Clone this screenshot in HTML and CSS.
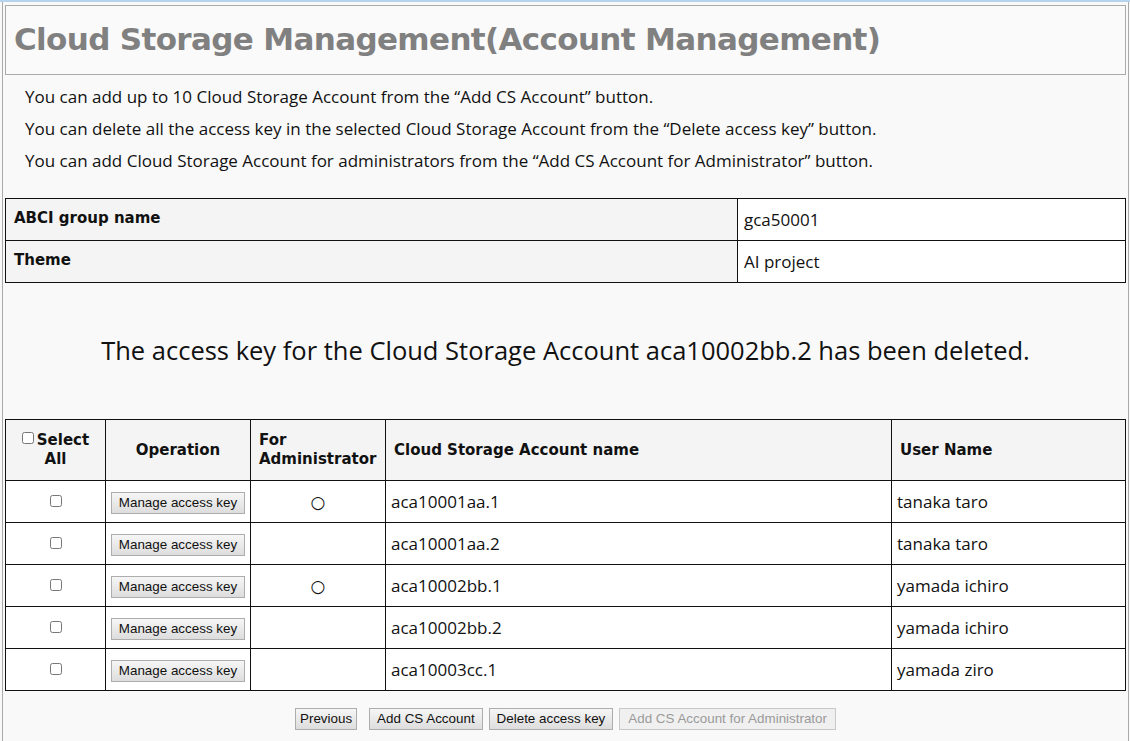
FILE: index.html
```html
<!DOCTYPE html>
<html lang="en">
<head>
<meta charset="utf-8">
<title>Cloud Storage Management(Account Management)</title>
<link rel="stylesheet" href="styles.css">
</head>
<body>
<div class="topline"></div>
<div class="frame">
  <div class="titlebox">
    <h1 class="title">Cloud Storage Management(Account Management)</h1>
  </div>
  <div class="intro">
    <p>You can add up to 10 Cloud Storage Account from the “Add CS Account” button.</p>
    <p>You can delete all the access key in the selected Cloud Storage Account from the “Delete access key” button.</p>
    <p>You can add Cloud Storage Account for administrators from the “Add CS Account for Administrator” button.</p>
  </div>
  <table class="info">
    <tr><th>ABCI group name</th><td>gca50001</td></tr>
    <tr><th>Theme</th><td>AI project</td></tr>
  </table>
  <p class="message">The access key for the Cloud Storage Account aca10002bb.2 has been deleted.</p>
  <table class="list">
    <colgroup>
      <col class="c-sel"><col class="c-op"><col class="c-adm"><col class="c-acc"><col class="c-user">
    </colgroup>
    <thead>
      <tr>
        <th class="center"><input type="checkbox" class="chk">Select All</th>
        <th class="center">Operation</th>
        <th>For Administrator</th>
        <th>Cloud Storage Account name</th>
        <th>User Name</th>
      </tr>
    </thead>
    <tbody>
      <tr><td class="center"><input type="checkbox" class="chk"></td><td class="center op"><button class="btn">Manage access key</button></td><td class="center mark">○</td><td>aca10001aa.1</td><td>tanaka taro</td></tr>
      <tr><td class="center"><input type="checkbox" class="chk"></td><td class="center op"><button class="btn">Manage access key</button></td><td class="center mark"></td><td>aca10001aa.2</td><td>tanaka taro</td></tr>
      <tr><td class="center"><input type="checkbox" class="chk"></td><td class="center op"><button class="btn">Manage access key</button></td><td class="center mark">○</td><td>aca10002bb.1</td><td>yamada ichiro</td></tr>
      <tr><td class="center"><input type="checkbox" class="chk"></td><td class="center op"><button class="btn">Manage access key</button></td><td class="center mark"></td><td>aca10002bb.2</td><td>yamada ichiro</td></tr>
      <tr><td class="center"><input type="checkbox" class="chk"></td><td class="center op"><button class="btn">Manage access key</button></td><td class="center mark"></td><td>aca10003cc.1</td><td>yamada ziro</td></tr>
    </tbody>
  </table>
  <div class="actions">
    <button class="btn btn-prev">Previous</button>
    <button class="btn">Add CS Account</button>
    <button class="btn">Delete access key</button>
    <button class="btn" disabled>Add CS Account for Administrator</button>
  </div>
</div>
</body>
</html>
```
FILE: styles.css
```css
html, body {
  margin: 0;
  padding: 0;
  background: #f9f9f9;
  overflow: hidden;
}
body {
  font-family: "Open Sans", "DejaVu Sans", sans-serif;
  color: #111;
}
.topline {
  height: 2px;
  background: #b7d4ee;
}
.frame {
  margin: 0 1px 0 2px;
  border-left: 1px solid #aaa;
  border-right: 1px solid #aaa;
  padding: 3px 2px 0 2px;
  background: #f9f9f9;
  box-sizing: border-box;
  height: calc(100vh - 2px);
}
.titlebox {
  border: 1px solid #aaa;
  display: flex;
  align-items: center;
  padding-left: 8px;
  padding-bottom: 3px;
  box-sizing: border-box;
  height: 70px;
  background: #fafafa;
}
.title {
  margin: 0;
  font-family: "DejaVu Sans", sans-serif;
  font-weight: bold;
  font-size: 31px;
  color: #808080;
  letter-spacing: -0.65px;
}
.intro {
  padding: 6px 0 0 20px;
}
.intro p {
  margin: 0;
  font-size: 17px;
  line-height: 32px;
}
.info, .list {
  width: 100%;
  border-collapse: collapse;
  background: #fff;
}
.info {
  margin-top: 21px;
}
.info th, .info td {
  border: 1px solid #111;
  height: 41px;
  text-align: left;
  padding: 0 6px;
}
.info th {
  width: 732px;
  background: #f4f4f4;
  font-family: "DejaVu Sans", sans-serif;
  font-size: 15px;
  padding-left: 8px;
  vertical-align: top;
  padding-top: 10px;
  box-sizing: border-box;
}
.info td {
  font-size: 17px;
}
.message {
  margin: 0;
  padding: 49px 0 0;
  height: 87px;
  text-align: center;
  font-size: 25.5px;
  line-height: 36px;
}
.list {
  table-layout: fixed;
}
.c-sel { width: 100px; }
.c-op { width: 145px; }
.c-adm { width: 135px; }
.c-acc { width: 506px; }
.list th, .list td {
  border: 1px solid #111;
  text-align: left;
}
.list th {
  background: #f4f4f4;
  font-family: "DejaVu Sans", sans-serif;
  font-size: 15px;
  height: 60px;
  padding: 0 8px;
  line-height: 19px;
}
.list td {
  height: 41px;
  padding: 0 5px;
  font-size: 17px;
}
.list td.op {
  padding: 0 2px;
  white-space: nowrap;
}
.list .center {
  text-align: center;
}
.chk {
  width: 12px;
  height: 12px;
  margin: 0 3px 0 0;
  vertical-align: 1px;
}
td .chk {
  margin: 0;
}
.mark {
  font-family: "DejaVu Sans", sans-serif;
  font-size: 14px;
}
.btn {
  font-family: "Liberation Sans", Arial, sans-serif;
  font-size: 13.4px;
  color: #111;
  height: 22px;
  padding: 0 7px;
  border: 1px solid #adadad;
  border-radius: 0;
  background: linear-gradient(#f6f6f6, #dddddd);
  line-height: 20px;
  white-space: nowrap;
}
.btn:disabled {
  color: #9a9a9a;
  border-color: #c8c8c8;
  background: #f0f0f0;
  padding: 0 8px;
}
.btn-prev {
  padding: 0 4px;
  margin-right: 6px;
}
.actions {
  display: flex;
  justify-content: center;
  gap: 6px;
  padding-top: 17px;
}
```
